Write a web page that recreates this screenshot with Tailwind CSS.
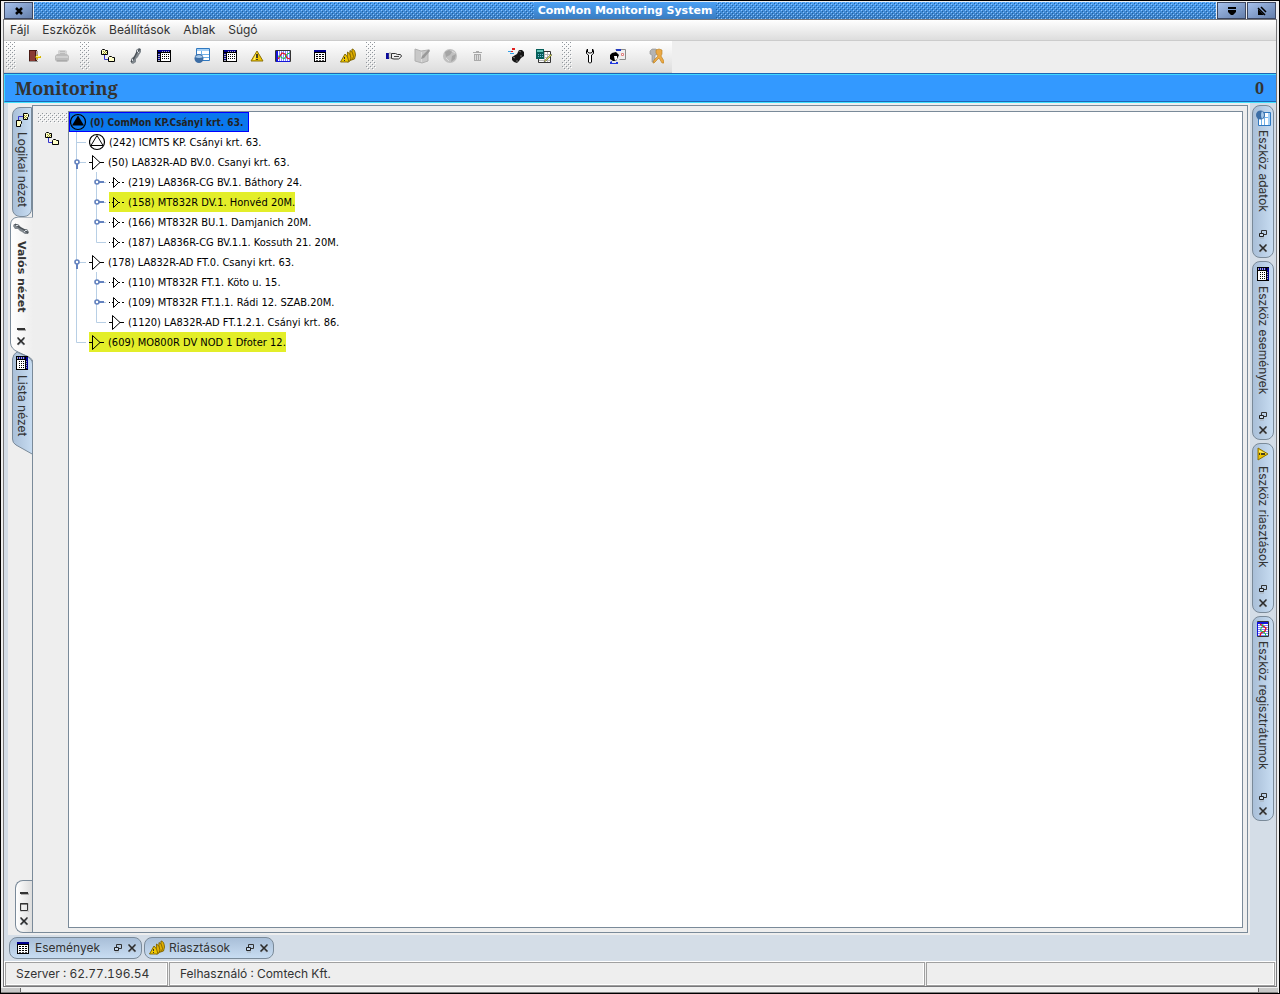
<!DOCTYPE html>
<html lang="hu">
<head>
<meta charset="utf-8">
<title>ComMon Monitoring System</title>
<script src="https://cdn.jsdelivr.net/npm/@tailwindcss/browser@4"></script>
</head>
<body class="h-screen overflow-hidden bg-black font-['Inter','Noto_Sans',sans-serif] text-xs text-[#333333]">

<!-- Shared icon definitions -->
<svg class="absolute size-0" xmlns="http://www.w3.org/2000/svg">
  <defs>
    <pattern id="dots" width="4" height="4" patternUnits="userSpaceOnUse"><path d="M0 0h1v1h-1zM2 2h1v1h-1z" fill="#8f959b"/><path d="M1 1h1v1h-1zM3 3h1v1h-1z" fill="#fff"/></pattern>
    <pattern id="tdots" width="4" height="4" patternUnits="userSpaceOnUse"><path d="M1 2h1v1h-1zM3 0h1v1h-1z" fill="#8cc4ff"/><path d="M2 3h1v1h-1zM0 1h1v1h-1z" fill="#2562a0"/></pattern>
    <linearGradient id="tabv" x1="0" x2="1"><stop offset="0" stop-color="#a9bfd8"/><stop offset="1" stop-color="#c8ddf2"/></linearGradient>
    <linearGradient id="acta" x1="0" x2="1"><stop offset="0" stop-color="#ffffff"/><stop offset="1" stop-color="#eeeeee"/></linearGradient>
  </defs>
  <symbol id="door" viewBox="0 0 16 16"><path d="M3 2h8v11H3z" fill="#4a1a14"/><path d="M4 3h5v10H4z" fill="#8a3b33"/><path d="M3 13h9v1H3z" fill="#999"/><path d="M10 3h2v9h-2z" fill="#b0a0a0"/><path d="M9 9l3-3v2h3v2h-3v2z" fill="#d8b800"/><path d="M10 8h4v1h-4z" fill="#fff27a"/></symbol>
  <symbol id="printer" viewBox="0 0 16 16"><path d="M5 2h6l2 1v4H4V3z" fill="#d4d4d4"/><path d="M6 3h5v1H6zM6 5h5v1H6z" fill="#bbb"/><path d="M1 8l2-2h10l2 2v4l-2 2H3l-2-2z" fill="#bcbcbc"/><path d="M2 8h12v2H2z" fill="#d0d0d0"/><path d="M3 12h10v1H3z" fill="#aaa"/></symbol>
  <symbol id="tree" viewBox="0 0 16 16"><path d="M4.500 7v4.500h4" fill="none" stroke="#3333cc"/><path d="M1.500 2.500l1-1h2l1 1h2v4h-6zM8.500 9.500l1-1h2l1 1h2v4h-6z" fill="#ffffc8" stroke="#000"/><path d="M3 3h1v1H3zM5 3h1v1H5zM4 4h1v1H4zM6 4h1v1H6zM3 5h1v1H3zM5 5h1v1H5z" fill="#999933"/></symbol>
  <symbol id="link" viewBox="0 0 16 16"><path d="M8 2l3-2 2 1v3l-2 3-1 2-2 2v3l-3 2-2-1v-4l2-2 2-1 1-2z" fill="#80878d"/><path d="M12 1l-3 3-3 6-3 4" fill="none" stroke="#4c5359" stroke-width="1.500"/><path d="M9 2h1v2H9zM4 11h1v2H4zM10 4h1v1h-1z" fill="#d8dde2"/></symbol>
  <symbol id="table" viewBox="0 0 16 16" shape-rendering="crispEdges"><path d="M1 2h14v12H1z" fill="#000"/><path d="M2 2h12v2H2zM2 5h2v8H2z" fill="#000090"/><path d="M2 6h2v1H2zM2 8h2v1H2zM2 10h2v1H2zM2 12h2v1H2zM6 3h1v1H6zM8 3h1v1H8zM10 3h1v1h-1zM12 3h1v1h-1z" fill="#aab"/><path d="M5 5h9v8H5z" fill="#fff"/><path d="M6 6h1v1H6zM8 6h1v1H8zM10 6h1v1h-1zM12 6h1v1h-1zM6 8h1v1H6zM8 8h1v1H8zM10 8h1v1h-1zM12 8h1v1h-1zM6 10h1v1H6zM8 10h1v1H8zM10 10h1v1h-1zM12 10h1v1h-1z" fill="#000"/></symbol>
  <symbol id="list" viewBox="0 0 16 16" shape-rendering="crispEdges"><path d="M2 2h12v12H2z" fill="#000"/><path d="M2 2h12v2H2z" fill="#000090"/><path d="M3 5h10v8H3z" fill="#fff"/><path d="M4 6h2v1H4zM7 6h2v1H7zM10 6h2v1h-2zM4 8h2v1H4zM7 8h2v1H7zM10 8h2v1h-2zM4 10h2v1H4zM7 10h2v1H7zM10 10h2v1h-2z" fill="#000"/><path d="M4 12h2v1H4zM7 12h2v1H7zM10 12h2v1h-2z" fill="#555"/></symbol>
  <symbol id="db" viewBox="0 0 16 16"><path d="M2.500.5h13v12h-13z" fill="#fff" stroke="#2f78c0"/><path d="M3 1h12v2H3z" fill="#a4d0f6"/><path d="M3 6.500h12M3 9.500h12M7.500 3v9" stroke="#6fb0e8" fill="none"/><circle cx="5" cy="10.500" r="4.500" fill="#3c6da5"/><path d="M1 9q4-4 8 0-4 2-8 0z" fill="#a4c8ea"/></symbol>
  <symbol id="warn" viewBox="0 0 16 16"><path d="M8 3L14 13H2z" fill="#eec300" stroke="#8c7208"/><path d="M8 4L4 12h2z" fill="#fff06c"/><path d="M7 6h2v4H7zM7 11h2v1H7z" fill="#444020"/></symbol>
  <symbol id="warns" viewBox="0 0 16 16"><g stroke="#7c6200" stroke-width=".9" fill="#e2b000"><path d="M12 1q3 0 3.500 6l-1 4-3 1z"/><path d="M10 2.500q3 1 3.500 6l-1 3-3 1z"/><path d="M7.500 4q3 1 3.500 6l-1 3-3 1z"/><path d="M5 6q3 2 4 8H.5z" fill="#f0c800"/></g><path d="M4 9h1v2H4zM4 12h1v1H4z" fill="#333"/></symbol>
  <symbol id="chart" viewBox="0 0 16 16"><path d="M.5 2.500h15v11H.5z" fill="#fff" stroke="#333"/><path d="M1 3h2v10H1z" fill="#1414d8"/><path d="M4.500 3v10M6.500 3v10M8.500 3v10M10.500 3v10M12.500 3v10M14.500 3v10" stroke="#8088ff"/><path d="M3 11l4-6 3 1 2 4 3 1" fill="none" stroke="#e01020" stroke-width="1.300"/><path d="M3 8l3 1 3 2 3-5 3-1" fill="none" stroke="#13c535"/><path d="M1 13h14v1H1z" fill="#1414d8"/></symbol>
  <symbol id="hand" viewBox="0 0 16 16"><path d="M0 5h3v6H0z" fill="#0a0a9c"/><path d="M3 5h2v5H3z" fill="#fff" stroke="#777" stroke-width=".6"/><path d="M5.500 5.500h4l2 1h3l1 1.500-1 1.500-2 1.500H8l-2.500-.5z" fill="#eee" stroke="#333"/><path d="M8 8.500h5" stroke="#444"/></symbol>
  <symbol id="book" viewBox="0 0 16 16"><path d="M1 1l6 2 7-1v11l-6 2-7-2z" fill="#c8c8c8" stroke="#b0b0b0"/><path d="M7.500 4v10" stroke="#ddd"/><path d="M15 1l-7 7-1 3 3-1 6-7z" fill="#999"/></symbol>
  <symbol id="ball" viewBox="0 0 16 16"><circle cx="8" cy="8" r="7" fill="#c0c0c0"/><path d="M3 4l4-2 3 2-2 3-4 2zM10 8l4-2-1 5-4 3z" fill="#a4a4a4"/><path d="M4 10l3 3M10 3l3 2" stroke="#ddd"/></symbol>
  <symbol id="trash" viewBox="0 0 16 16"><path d="M3 4h9v1H3zM6 3h3v1H6zM4 6h7v7H4z" fill="#aaa"/><path d="M5 7h1v5H5zM7 7h1v5H7zM9 7h1v5H9z" fill="#ddd"/></symbol>
  <symbol id="chip" viewBox="0 0 16 16"><path d="M4 9l5-3 2-4 3 0 2 2v4l-3 2-2 3-2 2-3-1-2-2z" fill="#151515"/><path d="M5 9l2 1M11 3l2 1M8 13h2M12 8l2 0" stroke="#777"/><path d="M4 0h3v2H4zM3 3h2v1H3z" fill="#e02020"/><path d="M0 3h3v1H0zM2 5h4v1H2z" fill="#30a0e8"/></symbol>
  <symbol id="calc" viewBox="0 0 16 16"><path d="M5.500 3.500h9v11h-12v-4" fill="#fff" stroke="#333"/><path d="M5 6.500h9M5 9.500h9M3 12.500h11M8.500 4v10M11.500 4v10" stroke="#b8b8b8"/><path d="M0 1h8v10H0z" fill="#055f5a"/><path d="M1 2h6v2H1z" fill="#62c4b8"/><path d="M2 6h1v1H2zM4 6h1v1H4zM6 6h1v1H6zM2 8h1v1H2zM4 8h1v1H4zM6 8h1v1H6z" fill="#7bd"/><path d="M15 6l-6 6-1 2 2-1 6-6z" fill="#d8dc50" stroke="#444" stroke-width=".5"/></symbol>
  <symbol id="wrench" viewBox="0 0 16 16"><path d="M5.500 1L4.500 2.500v3L6.500 7v7l1 1h1l1-1V7l2-1.500v-3L10.500 1v3l-1.500 1H7L5.500 4z" fill="#fff" stroke="#000"/></symbol>
  <symbol id="person" viewBox="0 0 16 16"><path d="M5.500 1.500h10v10h-6" fill="#eee" stroke="#8a8a8a"/><path d="M6 1h5v2H6z" fill="#2038c0"/><path d="M11.500 5.500h2v2h-2z" fill="#fff" stroke="#e08080"/><path d="M0 7l2-2 4-1 3 3-1 2-2 4H3L0 11z" fill="#000"/><path d="M4 8h3v3l-2 2z" fill="#fff"/><path d="M0 14l2-1v2h4v-1l2 0v2H0z" fill="#2038e0"/></symbol>
  <symbol id="keys" viewBox="0 0 16 16"><path d="M2 3l2-2h4l2 2v3L8 7H7v7H4V7L2 6z" fill="#b4b4b4" stroke="#8c8c8c" stroke-width=".6"/><path d="M8 2l3-1 3 1v4l-1 2 3 5v2h-2l-3-5-2 2-3 3H5l1-3 4-4-2-3z" fill="#eba945" stroke="#b67d20" stroke-width=".6"/></symbol>
  <symbol id="close" viewBox="0 0 10 10"><path d="M2 3l6 6M8 3L2 9" stroke="#a8b0b8" stroke-width="1.500"/><path d="M1.500 1.500l7 7M8.500 1.500l-7 7" stroke="#2a2a2a" stroke-width="1.500"/></symbol>
  <symbol id="restore" viewBox="0 0 10 10"><path d="M3.500 1.500h5v4h-5z" fill="none" stroke="#333"/><path d="M1.500 4.500h4v3h-4z" fill="#c8d8ea" stroke="#222"/><path d="M2 9h4" stroke="#a8b0b8"/></symbol>
  <symbol id="min" viewBox="0 0 10 10"><path d="M2 5h8v2H2z" fill="#aaa"/><path d="M1 4h8v2H1z" fill="#333"/></symbol>
  <symbol id="max" viewBox="0 0 10 10"><path d="M2 2h8v8H2z" fill="none" stroke="#bbb"/><path d="M1.500 1.500h7v7h-7zM1 2h8" fill="none" stroke="#333"/></symbol>
  <!-- Tree connectors and node glyphs -->
  <symbol id="c-v" viewBox="0 0 20 20"><path d="M7.500 0v20" stroke="#b8cfe5"/></symbol>
  <symbol id="c-t" viewBox="0 0 20 20"><path d="M7.500 0v20M8 10.500h9" stroke="#b8cfe5"/></symbol>
  <symbol id="c-l" viewBox="0 0 20 20"><path d="M7.500 0v10.500h9.500" fill="none" stroke="#b8cfe5"/></symbol>
  <symbol id="c-open" viewBox="0 0 20 20"><path d="M7.500 0v20M8 10.500h9" stroke="#b8cfe5"/><path d="M8 12v5" stroke="#6382bf" stroke-width="2"/><circle cx="8" cy="10" r="2" fill="#fff" stroke="#6382bf" stroke-width="1.600"/></symbol>
  <symbol id="c-shut" viewBox="0 0 20 20"><path d="M7.500 0v20M8 10.500h9" stroke="#b8cfe5"/><path d="M10 10h5" stroke="#6382bf" stroke-width="2"/><circle cx="8" cy="10" r="2" fill="#fff" stroke="#6382bf" stroke-width="1.600"/></symbol>
  <symbol id="n-root" viewBox="0 0 18 20"><circle cx="8" cy="10" r="7.500" fill="none" stroke="#000" stroke-width="1.200"/><path d="M8 3.500l6 10H2z"/></symbol>
  <symbol id="n-circ" viewBox="0 0 18 20"><circle cx="8" cy="10" r="7.500" fill="none" stroke="#000" stroke-width="1.200"/><path d="M8 3.500l6 10H2z" fill="none" stroke="#000"/></symbol>
  <symbol id="n-big" viewBox="0 0 18 20"><path d="M0 10.500h3.500M11 10.500h4M3.500 3.500v14l7.500-7z" fill="none" stroke="#000"/></symbol>
  <symbol id="n-small" viewBox="0 0 18 20"><path d="M0 10.500h1M3 10.500h2M9 10.500h2M13 10.500h2M4.500 5.500v10l5-5z" fill="none" stroke="#000"/></symbol>
</svg>

<div class="flex h-full flex-col border border-black bg-[#efefef] pt-px">
  <!-- Title bar -->
  <header class="mx-[3px] flex h-[17px] shrink-0 gap-px">
    <button aria-label="Bezárás" class="flex w-[29px] items-center justify-center border border-[#3b4660] bg-linear-to-br from-[#a5c0ec] to-[#6580ac]"><svg class="size-2.5"><path d="M2 2l6 6M8 2L2 8" stroke="#000" stroke-width="2.500"/></svg></button>
    <div class="relative flex grow items-center justify-center bg-linear-to-b from-[#4ba0f4] to-[#3a7dc2]">
      <svg class="absolute inset-0 size-full"><rect width="100%" height="100%" fill="url(#tdots)"/></svg>
      <h1 class="relative bg-linear-to-b from-[#4ba0f4] to-[#3a7dc2] px-1 font-['DejaVu_Sans',sans-serif] text-[11px] leading-[17px] font-bold text-white">ComMon Monitoring System</h1>
    </div>
    <button aria-label="Kis méret" class="flex w-[29px] items-center justify-center border border-[#3b4660] bg-linear-to-br from-[#a5c0ec] to-[#6580ac]"><svg class="size-2.5"><path d="M1 1h8v2H1zM1 4h8v2L6 9H4L1 6z"/></svg></button>
    <button aria-label="Teljes méret" class="flex w-[29px] items-center justify-center border border-[#3b4660] bg-linear-to-br from-[#a5c0ec] to-[#6580ac]"><svg class="size-2.5"><path d="M1 3v6h6z"/><path d="M1 2l7 7M4 1l5 5" stroke="#000" stroke-width="1.500"/></svg></button>
  </header>

  <div class="mx-0.5 flex min-h-0 grow flex-col border border-[#77777a] bg-[#eeeeee]">
    <!-- Menu -->
    <nav class="flex h-[21px] shrink-0 items-center gap-[13px] border-b border-[#cccccc] bg-linear-to-b from-white to-[#dddddd] px-1.5">
      <button>Fájl</button><button>Eszközök</button><button>Beállítások</button><button>Ablak</button><button>Súgó</button>
    </nav>

    <!-- Toolbars -->
    <div class="flex h-8 shrink-0">
      <div class="flex items-center border-b border-[#cccccc] bg-linear-to-b from-white to-[#dddddd] pr-0.5 pb-0.5 pl-0.5">
        <svg class="mr-1 h-7 w-2.5"><rect width="100%" height="100%" fill="url(#dots)"/></svg>
        <button aria-label="Kilépés" class="flex w-7 justify-center"><svg class="size-4"><use href="#door"/></svg></button>
        <button aria-label="Nyomtatás" disabled class="flex w-7 justify-center"><svg class="size-4"><use href="#printer"/></svg></button>
        <svg class="mx-1 h-7 w-2.5"><rect width="100%" height="100%" fill="url(#dots)"/></svg>
        <button aria-label="Logikai nézet" class="flex w-7 justify-center"><svg class="size-4"><use href="#tree"/></svg></button>
        <button aria-label="Valós nézet" class="flex w-7 justify-center"><svg class="size-4"><use href="#link"/></svg></button>
        <button aria-label="Lista nézet" class="flex w-7 justify-center"><svg class="size-4"><use href="#table"/></svg></button>
        <button aria-label="Eszköz adatok" class="ml-2.5 flex w-7 justify-center"><svg class="size-4"><use href="#db"/></svg></button>
        <button aria-label="Eszköz események" class="flex w-7 justify-center"><svg class="size-4"><use href="#table"/></svg></button>
        <button aria-label="Eszköz riasztások" class="flex w-[26px] justify-center"><svg class="size-4"><use href="#warn"/></svg></button>
        <button aria-label="Eszköz regisztrátumok" class="flex w-[26px] justify-center"><svg class="size-4"><use href="#chart"/></svg></button>
        <button aria-label="Események" class="ml-2.5 flex w-7 justify-center"><svg class="size-4"><use href="#list"/></svg></button>
        <button aria-label="Riasztások" class="flex w-7 justify-center"><svg class="size-4"><use href="#warns"/></svg></button>
        <svg class="mx-1 h-7 w-2.5"><rect width="100%" height="100%" fill="url(#dots)"/></svg>
        <button aria-label="Kijelölés" class="flex w-7 justify-center"><svg class="size-4"><use href="#hand"/></svg></button>
        <button aria-label="Szerkesztés" disabled class="flex w-7 justify-center"><svg class="size-4"><use href="#book"/></svg></button>
        <button aria-label="Frissítés" disabled class="flex w-7 justify-center"><svg class="size-4"><use href="#ball"/></svg></button>
        <button aria-label="Törlés" disabled class="flex w-7 justify-center"><svg class="size-4"><use href="#trash"/></svg></button>
        <button aria-label="Eszköz" class="ml-2.5 flex w-7 justify-center"><svg class="size-4"><use href="#chip"/></svg></button>
        <button aria-label="Számítás" class="flex w-7 justify-center"><svg class="size-4"><use href="#calc"/></svg></button>
        <svg class="mx-1 h-7 w-2.5"><rect width="100%" height="100%" fill="url(#dots)"/></svg>
        <button aria-label="Beállítások" class="flex w-7 justify-center"><svg class="size-4"><use href="#wrench"/></svg></button>
        <button aria-label="Felhasználó" class="flex w-7 justify-center"><svg class="size-4"><use href="#person"/></svg></button>
        <button aria-label="Jogosultságok" class="ml-2.5 flex w-7 justify-center"><svg class="size-4"><use href="#keys"/></svg></button>
      </div>
    </div>

    <!-- Banner -->
    <div class="shrink-0 border-b border-[#40e0ff] bg-[#1d66b4] pt-px">
      <div class="flex h-7 items-center justify-between border-t border-l border-[#40d8ff] border-b border-b-[#1d66b4] bg-[#3399ff] pr-3 pl-2.5 font-['Noto_Serif',serif] text-lg leading-7 font-bold">
        <h2>Monitoring</h2><span class="text-base">0</span>
      </div>
    </div>

    <!-- Work area -->
    <div class="flex min-h-0 grow bg-[#d4dde7] pl-1">
      <div class="flex min-w-0 grow bg-[#eeeeee] pt-0.5 pr-0.5 pb-0.5">
        <!-- Left tab strip -->
        <div class="flex w-6 shrink-0 flex-col">
          <button class="mt-0.5 ml-1 flex h-[110px] flex-col items-center gap-1 rounded-lg rounded-tr-none border border-[#7a8a99] bg-linear-to-r from-[#a9bfd8] to-[#c8ddf2] pt-1">
            <svg class="size-4 shrink-0 rotate-90"><use href="#tree"/></svg><span class="[writing-mode:vertical-rl]">Logikai nézet</span>
          </button>
          <div class="relative ml-0.5 flex h-[134px] flex-col items-center pt-1">
            <svg class="absolute inset-0 h-[146px] w-[23px]" viewBox="0 0 23 146"><path d="M23 0H8Q.5 1 .5 8V126Q1 132 8 135L19 140Q23 142 23 146" fill="url(#acta)" stroke="#7a8a99"/></svg>
            <svg class="relative size-4 shrink-0 rotate-90"><use href="#link"/></svg>
            <span class="relative mt-1 font-['DejaVu_Sans',sans-serif] text-[11px] leading-4 font-bold [writing-mode:vertical-rl]">Valós nézet</span>
            <button aria-label="Kis méret" class="relative mt-3"><svg class="size-2.5"><use href="#min"/></svg></button>
            <button aria-label="Bezárás" class="relative mt-0.5"><svg class="size-2.5"><use href="#close"/></svg></button>
          </div>
          <button class="relative ml-1 flex h-[104px] flex-col items-center gap-1 pt-1">
            <svg class="absolute inset-0 h-[104px] w-[21px]" viewBox="0 0 21 104"><path d="M21 103.500L4 94Q.5 92 .5 88V8Q1 3 5 1Q9 3 14 5Q20.500 8 20.500 13V104" fill="url(#tabv)" stroke="#7a8a99"/></svg>
            <svg class="relative size-4 shrink-0 rotate-90"><use href="#table"/></svg><span class="relative [writing-mode:vertical-rl]">Lista nézet</span>
          </button>
          <div class="mt-auto ml-[7px] flex h-[53px] flex-col items-center justify-end gap-1 rounded-l-lg border border-r-0 border-[#7a8a99] bg-linear-to-r from-white to-[#dddddd] pb-1.5">
            <button aria-label="Kis méret"><svg class="size-2.5"><use href="#min"/></svg></button>
            <button aria-label="Teljes méret"><svg class="size-2.5"><use href="#max"/></svg></button>
            <button aria-label="Bezárás"><svg class="size-2.5"><use href="#close"/></svg></button>
          </div>
        </div>
        <!-- Tree panel -->
        <main class="flex min-w-0 grow border border-[#7a8a99] pt-[5px] pr-1 pb-1">
          <div class="flex w-[35px] shrink-0 flex-col items-end gap-2 pt-0.5">
            <svg class="h-2.5 w-[30px]"><rect width="100%" height="100%" fill="url(#dots)"/></svg>
            <button aria-label="Fa kibontása" class="mr-2"><svg class="size-4"><use href="#tree"/></svg></button>
          </div>
          <div class="min-w-0 grow border border-[#7a8a99] bg-white font-['DejaVu_Sans_Condensed','DejaVu_Sans',sans-serif] text-[11px] leading-[21px] text-black">
            <ul>
              <li>
                <div class="flex h-5 w-[180px] items-center border border-[#0000ff] bg-[#0a78ee]"><svg class="h-5 w-[18px] shrink-0"><use href="#n-root"/></svg><span class="ml-0.5 text-[10px] font-bold whitespace-nowrap text-[#222222]">(0) ComMon KP.Csányi krt. 63.</span></div>
                <ul>
                  <li class="flex h-5"><svg class="size-5"><use href="#c-t"/></svg><svg class="h-5 w-[18px]"><use href="#n-circ"/></svg><span class="ml-0.5">(242) ICMTS KP. Csányi krt. 63.</span></li>
                  <li>
                    <div class="flex h-5"><svg class="size-5"><use href="#c-open"/></svg><svg class="h-5 w-[18px]"><use href="#n-big"/></svg><span class="ml-px">(50) LA832R-AD BV.0. Csanyi krt. 63.</span></div>
                    <ul>
                      <li class="flex h-5"><svg class="size-5"><use href="#c-v"/></svg><svg class="size-5"><use href="#c-shut"/></svg><svg class="h-5 w-[18px]"><use href="#n-small"/></svg><span class="ml-px">(219) LA836R-CG BV.1. Báthory 24.</span></li>
                      <li class="flex h-5"><svg class="size-5"><use href="#c-v"/></svg><svg class="size-5"><use href="#c-shut"/></svg><div class="flex bg-[#e3ee29]"><svg class="h-5 w-[18px]"><use href="#n-small"/></svg><span class="ml-px">(158) MT832R DV.1. Honvéd 20M.</span></div></li>
                      <li class="flex h-5"><svg class="size-5"><use href="#c-v"/></svg><svg class="size-5"><use href="#c-shut"/></svg><svg class="h-5 w-[18px]"><use href="#n-small"/></svg><span class="ml-px">(166) MT832R BU.1. Damjanich 20M.</span></li>
                      <li class="flex h-5"><svg class="size-5"><use href="#c-v"/></svg><svg class="size-5"><use href="#c-l"/></svg><svg class="h-5 w-[18px]"><use href="#n-small"/></svg><span class="ml-px">(187) LA836R-CG BV.1.1. Kossuth 21. 20M.</span></li>
                    </ul>
                  </li>
                  <li>
                    <div class="flex h-5"><svg class="size-5"><use href="#c-open"/></svg><svg class="h-5 w-[18px]"><use href="#n-big"/></svg><span class="ml-px">(178) LA832R-AD FT.0. Csanyi krt. 63.</span></div>
                    <ul>
                      <li class="flex h-5"><svg class="size-5"><use href="#c-v"/></svg><svg class="size-5"><use href="#c-shut"/></svg><svg class="h-5 w-[18px]"><use href="#n-small"/></svg><span class="ml-px">(110) MT832R FT.1. Köto u. 15.</span></li>
                      <li class="flex h-5"><svg class="size-5"><use href="#c-v"/></svg><svg class="size-5"><use href="#c-shut"/></svg><svg class="h-5 w-[18px]"><use href="#n-small"/></svg><span class="ml-px">(109) MT832R FT.1.1. Rádi 12. SZAB.20M.</span></li>
                      <li class="flex h-5"><svg class="size-5"><use href="#c-v"/></svg><svg class="size-5"><use href="#c-l"/></svg><svg class="h-5 w-[18px]"><use href="#n-big"/></svg><span class="ml-px">(1120) LA832R-AD FT.1.2.1. Csányi krt. 86.</span></li>
                    </ul>
                  </li>
                  <li class="flex h-5"><svg class="size-5"><use href="#c-l"/></svg><div class="flex bg-[#e3ee29]"><svg class="h-5 w-[18px]"><use href="#n-big"/></svg><span class="ml-px">(609) MO800R DV NOD 1 Dfoter 12.</span></div></li>
                </ul>
              </li>
            </ul>
          </div>
        </main>
      </div>

      <!-- Right tab strip -->
      <aside class="flex w-[26px] shrink-0 flex-col items-center gap-[3px] pt-0.5">
        <div class="flex h-[153px] w-[22px] flex-col items-center justify-between rounded-lg border border-[#7a8a99] bg-linear-to-r from-[#a9bfd8] to-[#c8ddf2] pt-1 pb-1">
          <button class="flex flex-col items-center gap-1"><svg class="size-4 rotate-90"><use href="#db"/></svg><span class="[writing-mode:vertical-rl]">Eszköz adatok</span></button>
          <span class="flex flex-col gap-1"><button aria-label="Visszaállítás"><svg class="size-2.5"><use href="#restore"/></svg></button><button aria-label="Bezárás"><svg class="size-2.5"><use href="#close"/></svg></button></span>
        </div>
        <div class="flex h-[179px] w-[22px] flex-col items-center justify-between rounded-lg border border-[#7a8a99] bg-linear-to-r from-[#a9bfd8] to-[#c8ddf2] pt-1 pb-1">
          <button class="flex flex-col items-center gap-1"><svg class="size-4 rotate-90"><use href="#table"/></svg><span class="[writing-mode:vertical-rl]">Eszköz események</span></button>
          <span class="flex flex-col gap-1"><button aria-label="Visszaállítás"><svg class="size-2.5"><use href="#restore"/></svg></button><button aria-label="Bezárás"><svg class="size-2.5"><use href="#close"/></svg></button></span>
        </div>
        <div class="flex h-[170px] w-[22px] flex-col items-center justify-between rounded-lg border border-[#7a8a99] bg-linear-to-r from-[#a9bfd8] to-[#c8ddf2] pt-0.5 pb-1">
          <button class="flex flex-col items-center gap-1"><svg class="size-4 rotate-90"><use href="#warn"/></svg><span class="[writing-mode:vertical-rl]">Eszköz riasztások</span></button>
          <span class="flex flex-col gap-1"><button aria-label="Visszaállítás"><svg class="size-2.5"><use href="#restore"/></svg></button><button aria-label="Bezárás"><svg class="size-2.5"><use href="#close"/></svg></button></span>
        </div>
        <div class="flex h-[205px] w-[22px] flex-col items-center justify-between rounded-lg border border-[#7a8a99] bg-linear-to-r from-[#a9bfd8] to-[#c8ddf2] pt-1 pb-1">
          <button class="flex flex-col items-center gap-1"><svg class="size-4 rotate-90"><use href="#chart"/></svg><span class="[writing-mode:vertical-rl]">Eszköz regisztrátumok</span></button>
          <span class="flex flex-col gap-1"><button aria-label="Visszaállítás"><svg class="size-2.5"><use href="#restore"/></svg></button><button aria-label="Bezárás"><svg class="size-2.5"><use href="#close"/></svg></button></span>
        </div>
      </aside>
    </div>

    <!-- Bottom tabs -->
    <div class="flex h-[26px] shrink-0 items-start gap-0.5 bg-[#d4dde7] pt-0.5 pl-[5px]">
      <div class="flex h-[22px] w-[133px] items-center justify-between rounded-lg border border-[#7a8a99] bg-linear-to-b from-[#a9bfd8] to-[#c8ddf2] pr-1 pl-[5px]">
        <button class="flex items-center gap-1"><svg class="size-4"><use href="#list"/></svg>Események</button>
        <span class="flex gap-1"><button aria-label="Visszaállítás"><svg class="size-2.5"><use href="#restore"/></svg></button><button aria-label="Bezárás"><svg class="size-2.5"><use href="#close"/></svg></button></span>
      </div>
      <div class="flex h-[22px] w-[130px] items-center justify-between rounded-lg border border-[#7a8a99] bg-linear-to-b from-[#a9bfd8] to-[#c8ddf2] px-1">
        <button class="flex items-center gap-1"><svg class="size-4"><use href="#warns"/></svg>Riasztások</button>
        <span class="flex gap-1"><button aria-label="Visszaállítás"><svg class="size-2.5"><use href="#restore"/></svg></button><button aria-label="Bezárás"><svg class="size-2.5"><use href="#close"/></svg></button></span>
      </div>
    </div>

    <!-- Status bar -->
    <footer class="flex h-[25px] shrink-0 border-t border-l border-white pr-px tabular-nums">
      <div class="flex w-[163px] items-stretch border border-[#a0a0a0] bg-white"><span class="mr-px mb-px grow bg-[#eeeeee] pl-2.5 leading-[21px]">Szerver : 62.77.196.54</span></div>
      <div class="ml-px flex w-[756px] items-stretch border border-[#a0a0a0] bg-white"><span class="mr-px mb-px grow bg-[#eeeeee] pl-2.5 leading-[21px]">Felhasználó : Comtech Kft.</span></div>
      <div class="ml-px flex grow items-stretch border border-[#a0a0a0] bg-white"><span class="mr-px mb-px grow bg-[#eeeeee]"></span></div>
    </footer>
  </div>
  <!-- Resize frame -->
  <div class="mr-px flex h-1.5 shrink-0 justify-between border-b border-[#808080] pt-px"><span class="w-5 border-r border-[#666666] bg-[#c8c8c8]"></span><span class="w-5 border-l border-[#666666] bg-[#c8c8c8]"></span></div>
</div>
</body>
</html>
